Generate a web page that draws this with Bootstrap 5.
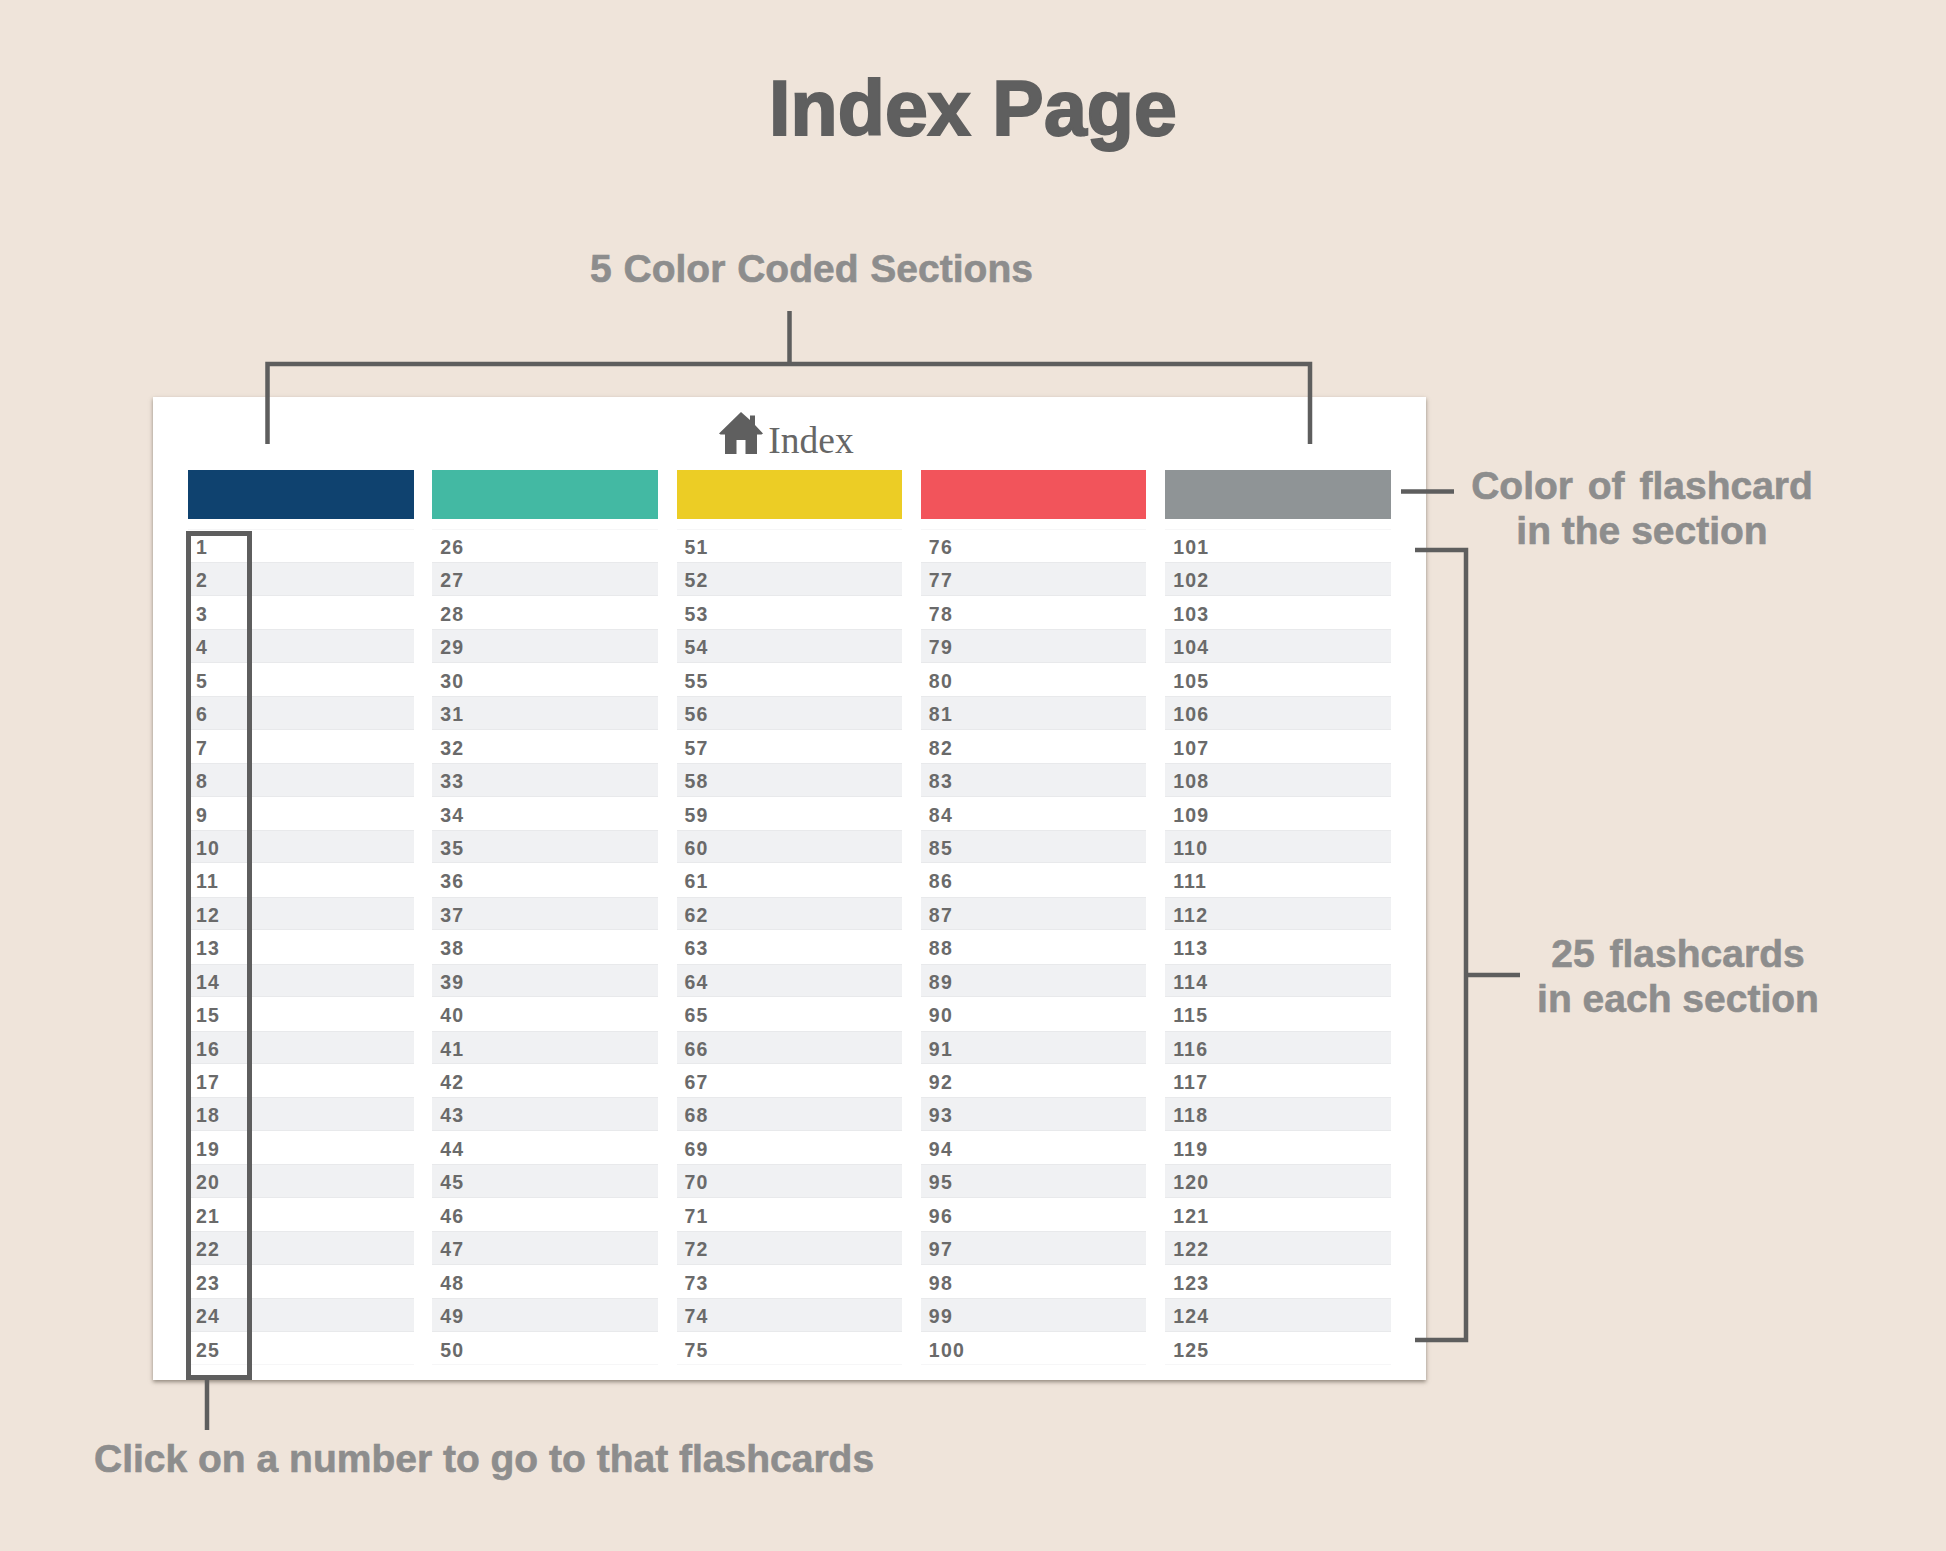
<!DOCTYPE html>
<html lang="en">
<head>
<meta charset="utf-8">
<title>Index Page</title>
<link rel="stylesheet" href="https://cdn.jsdelivr.net/npm/bootstrap@5.3.0/dist/css/bootstrap.min.css">
<style>
html,body{margin:0;background:#efe4da}
.canvas{width:1946px;height:1551px;position:relative;overflow:hidden;background:#efe4da;padding-top:60px;font-family:"Liberation Sans",Arial,sans-serif;font-variant-ligatures:none}
.page-title{font-family:"Liberation Sans",Arial,sans-serif;font-weight:700;font-size:77px;line-height:96px;color:#5f5f5f;margin:0;text-align:center;-webkit-text-stroke:2px #5f5f5f;letter-spacing:.15px}
.note{font-family:"Liberation Sans",Arial,sans-serif;font-weight:700;color:#8d8d8d;font-size:39px;line-height:45px;-webkit-text-stroke:.6px #8d8d8d}
.note-top{margin:90px 0 0 590px;width:444px;white-space:nowrap;height:46px;word-spacing:1px}
.note-bottom{margin:56px 0 0 94px;white-space:nowrap}
.note-side{position:absolute;text-align:center;white-space:nowrap;transform:translateX(-50%)}
.wide-words{word-spacing:4px}
.sheet{margin:105px 0 0 153px;width:1273px;height:983px;background:#fff;box-shadow:0 2px 4px rgba(70,60,50,.55);padding:0 35px}
.sheet-head{height:73px;gap:5px;padding-bottom:16px;padding-right:6px}
.sheet-name{font-family:"Liberation Serif","Times New Roman",serif;font-size:37.500px;line-height:40px;color:#666;height:40px;margin-bottom:-7px}
.cols{display:grid;grid-template-columns:repeat(5,225.600px);column-gap:18.700px}
.swatch{height:49px;margin-bottom:10px}
.sw1{background:#0f426f}.sw2{background:#43b9a3}.sw3{background:#eccd25}.sw4{background:#f2545b}.sw5{background:#8f9496}
.cell{height:33.440px;line-height:36.500px;padding-left:8px;font-family:"Liberation Sans",Arial,sans-serif;font-weight:700;font-size:19.500px;color:#6a6a6a;letter-spacing:1.200px}
.cell:nth-child(even){background:#f0f1f3;box-shadow:inset 0 -1px 0 #e8e9eb,inset 0 1px 0 #e8e9eb}
.cell:first-child{box-shadow:inset 0 1px 0 #f6f6f7}
.cell:last-child{box-shadow:inset 0 -1px 0 #f6f6f7}
.overlay{position:absolute;left:0;top:0;pointer-events:none}
</style>
</head>
<body>
<div class="canvas">
  <h1 class="page-title">Index Page</h1>
  <div class="note note-top">5 Color Coded Sections</div>
  <div class="sheet">
    <div class="sheet-head d-flex justify-content-center align-items-end">
      <svg width="44" height="42" viewBox="0 0 44 42" aria-hidden="true"><path fill="#5f5f5f" d="M22 0 31 8V3.500h5V13l8 8.500-1.500 1H38V42H26.500V28h-9V42H6V22.500H1.500L0 21.500Z"/></svg>
      <div class="sheet-name">Index</div>
    </div>
    <div class="cols">
      <div class="swatch sw1"></div><div class="swatch sw2"></div><div class="swatch sw3"></div><div class="swatch sw4"></div><div class="swatch sw5"></div>
      <div><div class="cell">1</div><div class="cell">2</div><div class="cell">3</div><div class="cell">4</div><div class="cell">5</div><div class="cell">6</div><div class="cell">7</div><div class="cell">8</div><div class="cell">9</div><div class="cell">10</div><div class="cell">11</div><div class="cell">12</div><div class="cell">13</div><div class="cell">14</div><div class="cell">15</div><div class="cell">16</div><div class="cell">17</div><div class="cell">18</div><div class="cell">19</div><div class="cell">20</div><div class="cell">21</div><div class="cell">22</div><div class="cell">23</div><div class="cell">24</div><div class="cell">25</div></div>
      <div><div class="cell">26</div><div class="cell">27</div><div class="cell">28</div><div class="cell">29</div><div class="cell">30</div><div class="cell">31</div><div class="cell">32</div><div class="cell">33</div><div class="cell">34</div><div class="cell">35</div><div class="cell">36</div><div class="cell">37</div><div class="cell">38</div><div class="cell">39</div><div class="cell">40</div><div class="cell">41</div><div class="cell">42</div><div class="cell">43</div><div class="cell">44</div><div class="cell">45</div><div class="cell">46</div><div class="cell">47</div><div class="cell">48</div><div class="cell">49</div><div class="cell">50</div></div>
      <div><div class="cell">51</div><div class="cell">52</div><div class="cell">53</div><div class="cell">54</div><div class="cell">55</div><div class="cell">56</div><div class="cell">57</div><div class="cell">58</div><div class="cell">59</div><div class="cell">60</div><div class="cell">61</div><div class="cell">62</div><div class="cell">63</div><div class="cell">64</div><div class="cell">65</div><div class="cell">66</div><div class="cell">67</div><div class="cell">68</div><div class="cell">69</div><div class="cell">70</div><div class="cell">71</div><div class="cell">72</div><div class="cell">73</div><div class="cell">74</div><div class="cell">75</div></div>
      <div><div class="cell">76</div><div class="cell">77</div><div class="cell">78</div><div class="cell">79</div><div class="cell">80</div><div class="cell">81</div><div class="cell">82</div><div class="cell">83</div><div class="cell">84</div><div class="cell">85</div><div class="cell">86</div><div class="cell">87</div><div class="cell">88</div><div class="cell">89</div><div class="cell">90</div><div class="cell">91</div><div class="cell">92</div><div class="cell">93</div><div class="cell">94</div><div class="cell">95</div><div class="cell">96</div><div class="cell">97</div><div class="cell">98</div><div class="cell">99</div><div class="cell">100</div></div>
      <div><div class="cell">101</div><div class="cell">102</div><div class="cell">103</div><div class="cell">104</div><div class="cell">105</div><div class="cell">106</div><div class="cell">107</div><div class="cell">108</div><div class="cell">109</div><div class="cell">110</div><div class="cell">111</div><div class="cell">112</div><div class="cell">113</div><div class="cell">114</div><div class="cell">115</div><div class="cell">116</div><div class="cell">117</div><div class="cell">118</div><div class="cell">119</div><div class="cell">120</div><div class="cell">121</div><div class="cell">122</div><div class="cell">123</div><div class="cell">124</div><div class="cell">125</div></div>
    </div>
  </div>
  <div class="note note-bottom">Click on a number to go to that flashcards</div>

  <svg class="overlay" width="1946" height="1551" viewBox="0 0 1946 1551" fill="none" stroke="#5e5e5e" stroke-width="4.500" aria-hidden="true">
    <path d="M267.500 444V364H1310V444M789.500 311V364"/>
    <path d="M1401 491.500H1454"/>
    <path d="M1415 550H1466V1340H1415M1466 975H1520"/>
    <rect x="188.500" y="533.500" width="61" height="844" stroke-width="5"/>
    <path d="M207 1380V1430"/>
  </svg>
  <div class="note note-side" style="left:1642px;top:463px"><span class="wide-words">Color of flashcard</span><br>in the section</div>
  <div class="note note-side" style="left:1678px;top:931px"><span class="wide-words">25 flashcards</span><br>in each section</div>
</div>
<script src="https://cdn.jsdelivr.net/npm/bootstrap@5.3.0/dist/js/bootstrap.bundle.min.js"></script>
</body>
</html>
